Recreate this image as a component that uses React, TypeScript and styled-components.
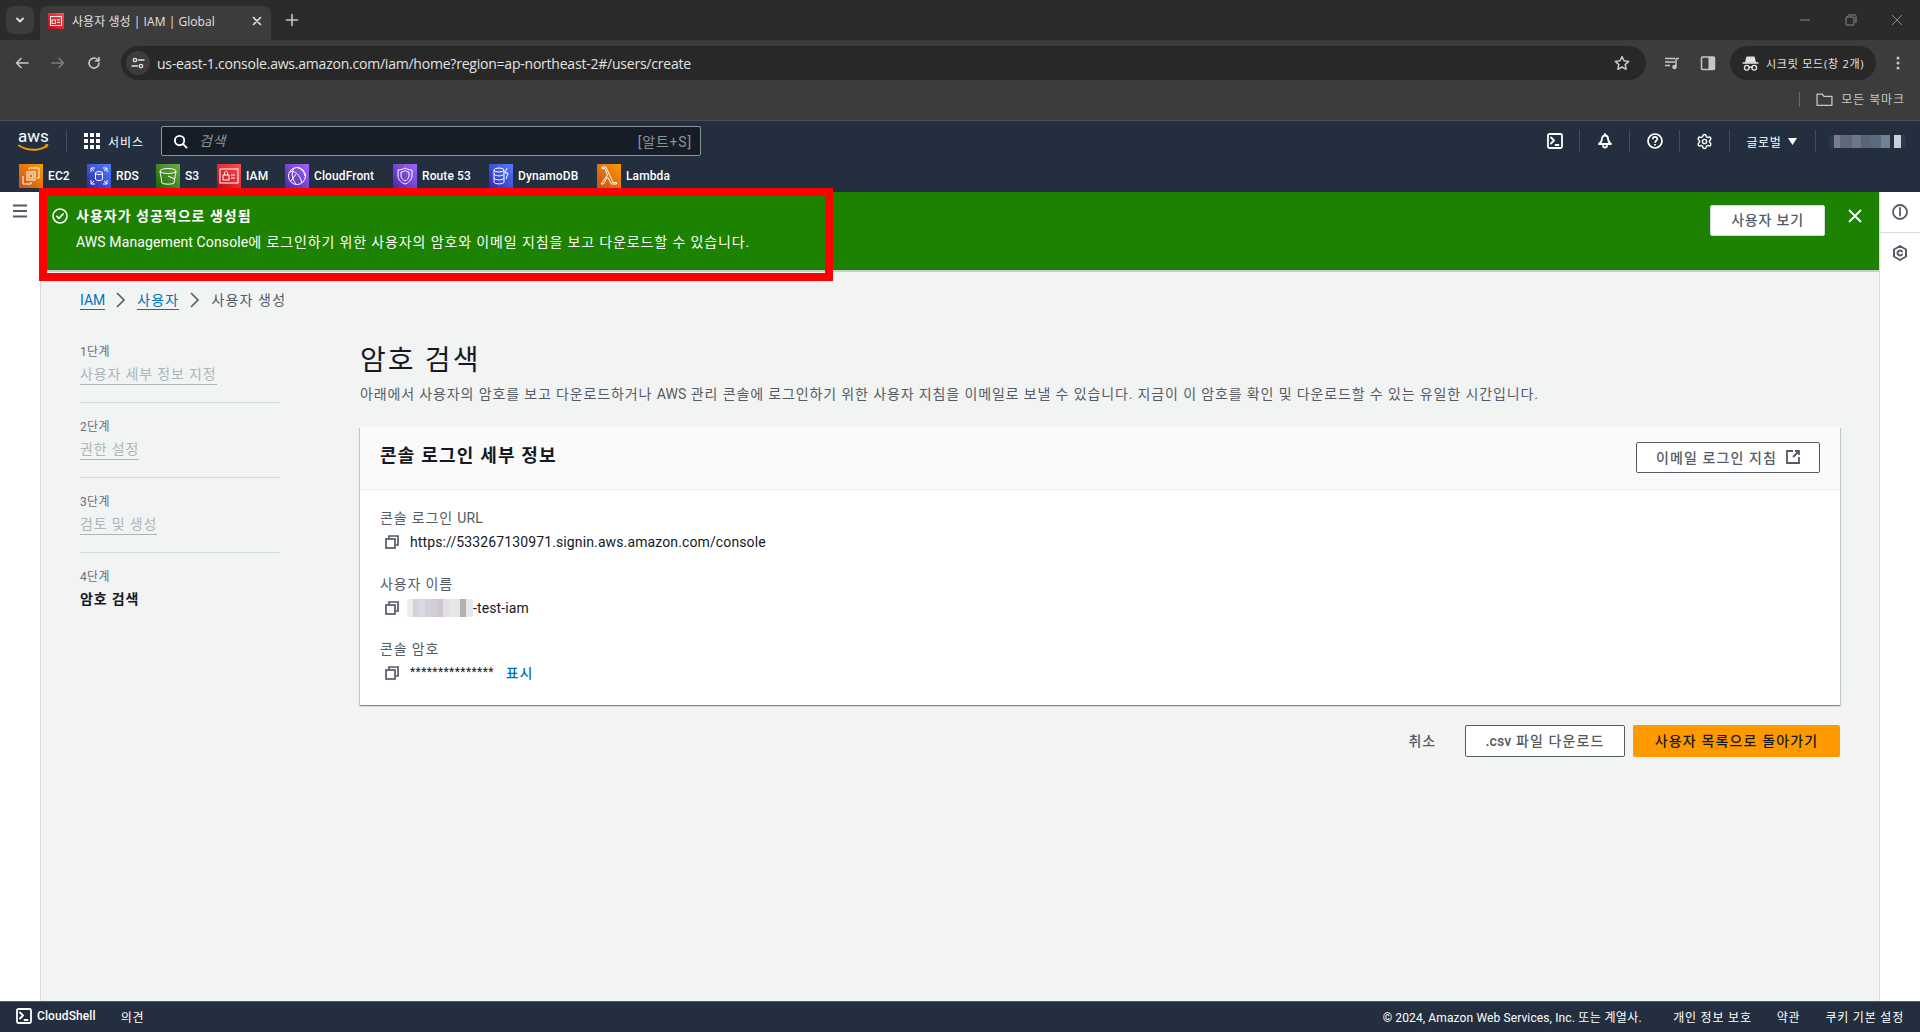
import React from "react";
import styled, { createGlobalStyle } from "styled-components";
import { Settings } from "lucide-react";

const SANS = `"Open Sans", "Noto Sans CJK KR", sans-serif`;
const EMBER = `Roboto, "Noto Sans CJK KR", sans-serif`;

const Global = createGlobalStyle`
  html, body { margin: 0; padding: 0; height: 100%; background: #fff; overflow: hidden; }
  * { box-sizing: border-box; }
  #root { height: 100%; }
`;

const Page = styled.div`
  position: relative; width: 1920px; height: 1032px; display: flex; flex-direction: column;
  font-family: ${EMBER}; font-size: 14px; color: #16191f; overflow: hidden;
`;

const L = styled.span` letter-spacing: 0.12px; `;

/* ---------- Browser chrome ---------- */
const TabStrip = styled.div`
  height: 40px; background: #2b2b2b; display: flex; align-items: flex-end; padding-left: 6px; position: relative; flex: none;
`;
const TabMenu = styled.div`
  width: 28px; height: 28px; margin-bottom: 6px; border-radius: 8px; background: #3c3c3c;
  display: flex; align-items: center; justify-content: center; color: #e3e3e3;
`;
const Tab = styled.div`
  width: 231px; height: 34px; margin-left: 6px; background: #3c3c3c; border-radius: 8px 8px 0 0;
  display: flex; align-items: center; padding: 0 8px 4px; gap: 8px; color: #e3e3e3;
  font: 12px ${SANS};
`;
const TabFavicon = styled.div`
  width: 16px; height: 16px; flex: none; display: flex; background: linear-gradient(45deg, #bd0816, #ff5252);
`;
const TabTitle = styled.span` flex: 1; white-space: nowrap; letter-spacing: 0.05px; `;
const NewTab = styled.div` margin: 0 0 12px 13px; color: #c7c7c7; display: flex; width: 16px; height: 16px; `;
const WindowControls = styled.div`
  margin-left: auto; height: 40px; display: flex; align-self: flex-start; align-items: center; gap: 30px; padding-right: 15px; color: #8a8a8a;
`;
const Toolbar = styled.div`
  height: 40px; background: #3c3c3c; display: flex; align-items: flex-end; padding: 0 0 0 14px; flex: none; color: #c7c7c7;
`;
const NavButton = styled.div<{ $dim?: boolean }>`
  width: 16px; height: 16px; margin: 0 20px 9px 0; display: flex; color: ${p => (p.$dim ? "#7c7c7c" : "#c7c7c7")};
`;
const Omnibox = styled.div`
  margin-left: -1px; width: 1525px; height: 34px; border-radius: 17px; background: #282828; display: flex; align-items: center; padding: 0 16px 0 5px;
`;
const SiteInfo = styled.div`
  width: 24px; height: 24px; border-radius: 12px; background: #3c3c3c; display: flex; align-items: center; justify-content: center; color: #e3e3e3;
`;
const Url = styled.div` flex: 1; margin-left: 7px; font: 14px ${SANS}; color: #e3e3e3; white-space: nowrap; letter-spacing: -0.22px; `;
const ToolIcon = styled.div<{ $gap: number }>`
  width: 16px; height: 16px; margin: 0 0 9px ${p => p.$gap}px; display: flex; color: #c7c7c7; flex: none;
`;
const Incognito = styled.div`
  margin-left: 14px; width: 146px; height: 34px; border-radius: 17px; background: #282828; display: flex; align-items: center; padding-left: 12px; gap: 7px;
  color: #e3e3e3; font: 11px ${SANS}; white-space: nowrap; letter-spacing: 0.75px;
`;
const Kebab = styled.div` margin: 0 0 9px 14px; width: 16px; height: 16px; display: flex; color: #c7c7c7; `;
const Bookmarks = styled.div`
  height: 41px; background: #3c3c3c; border-bottom: 1px solid #4a5058; display: flex; align-items: center; justify-content: flex-end;
  padding: 0 15px 2px 0; color: #c7c7c7; font: 12px ${SANS}; flex: none; letter-spacing: 0.9px;
`;
const BookmarkDivider = styled.div` width: 1px; height: 15px; background: #6a6a6a; margin-right: 16px; `;
const FolderWrap = styled.div` display: flex; width: 17px; height: 17px; margin-right: 8px; `;

/* ---------- Console header ---------- */
const ConsoleHeader = styled.header`
  height: 71px; background: #232f3e; flex: none; display: flex; flex-direction: column; color: #fff;
`;
const TopRow = styled.div` height: 43px; display: flex; align-items: center; padding: 0 14px 3px 18px; flex: none; `;
const LogoWrap = styled.div` width: 32px; height: 24px; display: flex; flex: none; `;
const LogoSvg = styled.svg` overflow: visible; `;
const LogoDivider = styled.div` width: 1px; height: 22px; background: #414d5c; margin: 0 17px 0 16px; flex: none; `;
const Services = styled.div` display: flex; align-items: center; gap: 8px; font: 12px ${EMBER}; width: 77px; flex: none; letter-spacing: 0.9px; white-space: nowrap; `;
const SearchBox = styled.div`
  width: 540px; height: 30px; background: #161d26; border: 1px solid #879596; border-radius: 2px; display: flex; align-items: center; padding: 0 9px 0 11px; flex: none;
`;
const SearchHint = styled.span` font: italic 14px ${EMBER}; color: #879596; margin: 0 0 2px 11px; flex: 1; letter-spacing: 0.6px; `;
const SearchKey = styled.span` font: 14px ${EMBER}; color: #879596; letter-spacing: 0.8px; margin-right: -1px; `;
const HeaderRight = styled.div` margin-left: auto; display: flex; align-items: center; height: 22px; `;
const HeaderIcon = styled.div`
  width: 50px; height: 22px; display: flex; align-items: center; justify-content: center; border-right: 1px solid #414d5c; color: #fff;
`;
const Region = styled.div`
  width: 86px; height: 22px; display: flex; align-items: center; justify-content: center; gap: 6px; border-right: 1px solid #414d5c; font: 12px ${EMBER}; padding-right: 2px; letter-spacing: 0.7px;
`;
const AccountBlur = styled.div`
  width: 77px; height: 13px; margin-left: 13px;
  background: linear-gradient(90deg, #2a3a4e 0 6%, #7c7c88 6% 14%, #5e6a7a 14% 30%, #6d7785 30% 42%, #56657a 42% 54%, #5d6b7e 54% 68%, #6d8296 68% 79%, #232f3e 79% 84%, #c9cfd6 84% 93%, #2c3846 93% 100%);
`;
const ShortcutRow = styled.div` display: flex; align-items: flex-start; padding-left: 19px; height: 28px; `;
const Shortcut = styled.div<{ $w: number }>`
  display: flex; align-items: flex-start; gap: 5px; width: ${p => p.$w}px; font: 500 12px/24px ${EMBER}; white-space: nowrap; flex: none; letter-spacing: 0.1px;
`;
const ServiceIcon = styled.div<{ $from: string; $to: string }>`
  width: 24px; height: 24px; flex: none; display: flex; color: #fff;
  background: linear-gradient(45deg, ${p => p.$from}, ${p => p.$to});
`;

/* ---------- Body ---------- */
const Body = styled.div` flex: 1; display: flex; min-height: 0; `;
const LeftRail = styled.div`
  width: 41px; flex: none; background: #fff; border-right: 1px solid #d5dbdb; padding: 12px 0 0 13px; color: #545b64;
`;
const Hamburger = styled.div` width: 14px; height: 14px; display: flex; `;
const Main = styled.main` flex: 1; background: #f2f3f3; display: flex; flex-direction: column; min-width: 0; `;
const RightRail = styled.div` width: 41px; flex: none; background: #fff; border-left: 1px solid #d5dbdb; color: #545b64; display: flex; flex-direction: column; `;
const RailButton = styled.div<{ $line?: boolean }>`
  height: ${p => (p.$line ? 41 : 40)}px; display: flex; align-items: center; justify-content: center;
  ${p => (p.$line ? "border-bottom: 1px solid #d5dbdb;" : "")}
`;
const Banner = styled.div`
  height: 80px; flex: none; background: #1d8102; border-bottom: 2px solid #c9cdcd; color: #fff; display: flex; align-items: flex-start; position: relative;
  padding: 13px 16px 0 11px;
`;
const BannerCheck = styled.div` width: 16px; height: 16px; display: flex; margin: 3px 8px 0 0; flex: none; `;
const BannerText = styled.div` flex: 1; `;
const BannerTitle = styled.div` font: 700 14px/20px ${EMBER}; letter-spacing: 1px; padding-top: 1px; `;
const BannerMessage = styled.div` font: 14px/20px ${EMBER}; margin-top: 6px; letter-spacing: 0.87px; `;
const BannerButton = styled.button`
  width: 115px; height: 31px; background: #fff; border: 1px solid #d5dbdb; border-radius: 2px; font: 500 14px ${EMBER}; color: #545b64; margin: 0 22px 0 0; padding: 0 0 3px; letter-spacing: 0.8px;
`;
const BannerClose = styled.div` width: 16px; height: 16px; display: flex; margin-top: 3px; `;

const Highlight = styled.div`
  position: absolute; left: 39px; top: 188px; width: 794px; height: 93px; border: 8px solid #ff0000; pointer-events: none;
`;

const Breadcrumbs = styled.nav`
  height: 69px; flex: none; padding: 18px 0 0 39px; display: flex; align-items: flex-start; line-height: 20px; color: #545b64; letter-spacing: 1.15px;
`;
const Crumb = styled.a<{ $latin?: boolean }>`
  color: #0073bb; text-decoration: none; border-bottom: 1px solid #0073bb; height: 20px; ${p => (p.$latin ? "letter-spacing: 0;" : "")}
`;
const CrumbSep = styled.span` display: flex; width: 12px; height: 16px; margin: 2px 10px 0 10px; color: #545b64; `;
const Columns = styled.div` display: grid; grid-template-columns: 200px 1fr; column-gap: 80px; padding: 0 39px 0 39px; `;
const Steps = styled.ol` list-style: none; margin: 0; padding: 3px 0 0 0; `;
const Step = styled.li<{ $last?: boolean }>`
  padding-bottom: 17px; margin-bottom: 16px; ${p => (p.$last ? "" : "border-bottom: 1px solid #d5dbdb;")}
`;
const StepNumber = styled.div` font: 12px/16px ${EMBER}; color: #687078; margin-bottom: 5px; letter-spacing: 0.3px; `;
const StepName = styled.div<{ $active?: boolean }>`
  line-height: 19px; letter-spacing: 0.85px; display: inline-block;
  ${p => (p.$active
    ? "font-weight: 700; color: #16191f;"
    : "color: #aab7b8; border-bottom: 1px solid #aab7b8;")}
`;
const Content = styled.div` min-width: 0; `;
const Title = styled.h1` margin: 2px 0 0; font: 400 28px/36px ${EMBER}; color: #16191f; letter-spacing: 2.1px; `;
const Description = styled.p` margin: 5px 0 0; line-height: 20px; color: #545b64; white-space: nowrap; letter-spacing: 0.87px; `;
const Card = styled.section`
  margin-top: 23px; background: #fff; height: 278px;
  box-shadow: 0 1px 1px 0 rgba(0,28,36,.3), 1px 1px 1px 0 rgba(0,28,36,.15), -1px 1px 1px 0 rgba(0,28,36,.15);
`;
const CardHeader = styled.div`
  height: 63px; background: #fafafa; border-bottom: 1px solid #eaeded; display: flex; justify-content: space-between; align-items: flex-start; padding: 15px 20px 0;
`;
const CardTitle = styled.h2` margin: 1px 0 0; font: 700 18px/26px ${EMBER}; color: #16191f; letter-spacing: 1.2px; `;
const OutlineButton = styled.button<{ $w: number; $h: number }>`
  width: ${p => p.$w}px; height: ${p => p.$h}px; background: #fff; border: 1px solid #545b64; border-radius: 2px; color: #545b64;
  font: 500 14px ${EMBER}; display: flex; align-items: center; justify-content: center; gap: 9px; padding: 0 0 2px; letter-spacing: 1.1px;
`;
const CardBody = styled.div` padding: 18px 20px 0; `;
const Field = styled.div` margin-bottom: 19.5px; `;
const FieldLabel = styled.div` line-height: 20px; color: #545b64; margin-bottom: 2px; letter-spacing: 0.85px; `;
const FieldValue = styled.div` height: 24px; display: flex; align-items: center; color: #16191f; padding-left: 5px; letter-spacing: 0.12px; `;
const CopyIcon = styled.div` width: 14px; height: 14px; display: flex; color: #545b64; flex: none; margin-right: 11px; `;
const UserBlur = styled.span`
  width: 66px; height: 18px; margin-left: -3px; flex: none;
  background: linear-gradient(90deg, #ececec 0 9%, #d6cfd4 9% 18%, #ddd8df 18% 27%, #cfcfd9 27% 36%, #d3ced8 36% 45%, #cfc7cc 45% 54%, #dfdfe5 54% 63%, #e6e6e9 63% 81%, #b8b0b0 81% 90%, #e8e8e8 90% 100%);
`;
const ShowLink = styled.a` color: #0073bb; margin: 0 0 2px 12px; letter-spacing: 0.8px; font-weight: 500; `;
const Masked = styled.span` font-size: 12px; letter-spacing: 0.42px; margin-bottom: 3px; `;
const Actions = styled.div` margin-top: 20px; display: flex; justify-content: flex-end; align-items: center; `;
const CancelButton = styled.button`
  border: 0; background: none; font: 500 14px ${EMBER}; color: #545b64; padding: 0 0 2px; margin-right: 29px; letter-spacing: 0.9px;
`;
const PrimaryButton = styled.button`
  width: 207px; height: 32px; margin-left: 8px; background: #ff9900; border: 0; border-radius: 2px; font: 500 14px ${EMBER}; color: #16191f; padding: 0 0 2px; letter-spacing: 1.15px;
`;

/* ---------- Footer ---------- */
const Footer = styled.footer`
  height: 31px; flex: none; background: #232f3e; border-top: 1px solid #545b64; color: #fff; display: flex; align-items: center; font: 12px ${EMBER}; padding: 0 16px 2px;
`;
const FooterLeft = styled.div` display: flex; align-items: center; `;
const FooterShell = styled.span` display: flex; align-items: center; gap: 5px; margin-right: 25px; font-weight: 500; letter-spacing: 0.1px; `;
const FooterLink = styled.span` letter-spacing: 0.8px; `;
const Copyright = styled.span` letter-spacing: 0.35px; margin-right: 6px; `;
const FooterRight = styled.div` margin-left: auto; display: flex; gap: 25px; `;

/* ---------- Icons ---------- */
const Svg: React.FC<React.PropsWithChildren<{ s?: number; vb?: string; sw?: number }>> = ({ s = 16, vb = "0 0 16 16", sw = 2, children }) => (
  <svg width={s} height={s} viewBox={vb} fill="none" stroke="currentColor" strokeWidth={sw} strokeLinecap="round" strokeLinejoin="round">{children}</svg>
);

const ShellIcon = () => (
  <Svg sw={1.8}><rect x="1" y="1" width="14" height="14" rx="1.5" /><path d="M4 4.5 7 7.5 4 10.5M8.5 12h3" /></Svg>
);
const Copy = () => (
  <Svg s={14} vb="0 0 14 14" sw={1.7}><path d="M4 3.5V1h9v9h-2.5" strokeLinejoin="miter" strokeLinecap="butt" /><rect x="1" y="4" width="9" height="9" strokeLinejoin="miter" /></Svg>
);
const ExternalIcon = () => (
  <Svg s={14} vb="0 0 14 14" sw={1.8}><path d="M7 1H1v12h12V7M7 7l6-6M9 1h4v4" strokeLinecap="butt" strokeLinejoin="miter" /></Svg>
);

const AwsLogo = () => (
  <LogoSvg width="32" height="24" viewBox="0 0 32 24">
    <text x="0" y="13" fill="#fff" fontFamily="Roboto, sans-serif" fontSize="17">aws</text>
    <path d="M1 16.5c8 5.5 20 5.5 27 1" stroke="#f90" strokeWidth="1.8" fill="none" strokeLinecap="round" />
    <path d="M26.5 15.5l4-.5-1.5 4" fill="#f90" />
  </LogoSvg>
);

const GridIcon = () => (
  <svg width="16" height="16" viewBox="0 0 16 16" fill="#fff">
    {[0, 6, 12].map(y => [0, 6, 12].map(x => <rect key={`${x}${y}`} x={x} y={y} width="4" height="4" />))}
  </svg>
);

const ServiceSvg: React.FC<React.PropsWithChildren> = ({ children }) => (
  <svg width="24" height="24" viewBox="0 0 24 24" fill="none" stroke="#fff" strokeWidth="1">{children}</svg>
);

const services: { name: string; w: number; from: string; to: string; art: React.ReactNode }[] = [
  { name: "EC2", w: 68, from: "#c8511b", to: "#ff9900", art: <><rect x="8" y="8" width="8" height="8" /><path d="M10 5.500V4h10v10h-2M4 12v8h8v-2" /><path d="M10 10h4v4h-4z" /></> },
  { name: "RDS", w: 69, from: "#2e27ad", to: "#527fff", art: <><ellipse cx="12" cy="9" rx="3.500" ry="1.500" /><path d="M8.500 9v6c0 2 7 2 7 0V9M4 8V4h4M20 8V4h-4M4 16v4h4M20 16v4h-4M4 4l3 3M20 4l-3 3M4 20l3-3M20 20l-3-3" /></> },
  { name: "S3", w: 61, from: "#1b660f", to: "#6cae3e", art: <><ellipse cx="12" cy="7" rx="8" ry="2.500" /><path d="M4 7l2 12c.500 1.500 11.500 1.500 12 0l2-12M12 12l7 3" /></> },
  { name: "IAM", w: 68, from: "#bd0816", to: "#ff5252", art: <><rect x="3" y="5" width="18" height="14" /><rect x="6" y="11" width="6" height="5" /><path d="M7.500 11V9c0-2 3-2 3 0v2M14 11h4M14 14h4" /></> },
  { name: "CloudFront", w: 108, from: "#4d27a8", to: "#a166ff", art: <><circle cx="12" cy="12" r="8.500" /><path d="M5 8c5-2 10 3 12 11M9 4c-3 5-2 11 2 16M13 4c5 1 6 5 7 8M6 17l5-7" /></> },
  { name: "Route 53", w: 96, from: "#4d27a8", to: "#a166ff", art: <><path d="M5 6c3 0 5-1 7-2 2 1 4 2 7 2v6c0 4-4 7-7 8-3-1-7-4-7-8z" /><path d="M8 8c2 0 3-1 4-1.500C13 7 14 8 16 8v4c0 2-2 4-4 5-2-1-4-3-4-5z" /></> },
  { name: "DynamoDB", w: 108, from: "#2e27ad", to: "#527fff", art: <><ellipse cx="10" cy="6" rx="5" ry="2" /><path d="M5 6v12c0 2.500 10 2.500 10 0V6M5 10c1 2.500 9 2.500 10 0M5 14c1 2.500 9 2.500 10 0M18 4l-2 5h3l-2 6" /></> },
  { name: "Lambda", w: 70, from: "#c8511b", to: "#ff9900", art: <path d="M4 20l6.500-9L8 4.500H5V3h4l7 15.500h3.500V20h-5L10.500 13 6.500 20z" /> },
];

const steps = [
  { n: "1단계", name: "사용자 세부 정보 지정" },
  { n: "2단계", name: "권한 설정" },
  { n: "3단계", name: "검토 및 생성" },
];

export default function App() {
  return (
    <Page>
      <Global />
      <TabStrip>
        <TabMenu><Svg s={12} vb="0 0 12 12" sw={1.8}><path d="M3 4.500 6 7.500 9 4.500" /></Svg></TabMenu>
        <Tab>
          <TabFavicon>
            <svg width="16" height="16" viewBox="0 0 16 16" fill="none" stroke="#fff" strokeWidth="0.9"><rect x="2.500" y="3.500" width="11" height="9" /><rect x="4" y="7" width="3.500" height="3.500" /><path d="M9 7h3M9 9.500h3" /></svg>
          </TabFavicon>
          <TabTitle>사용자 생성 | IAM | Global</TabTitle>
          <Svg s={12} vb="0 0 12 12" sw={1.6}><path d="M2.500 2.500l7 7M9.500 2.500l-7 7" /></Svg>
        </Tab>
        <NewTab><Svg sw={1.6}><path d="M8 2.500v11M2.500 8h11" /></Svg></NewTab>
        <WindowControls>
          <Svg sw={1}><path d="M3 8h10" strokeLinecap="butt" /></Svg>
          <Svg sw={1}><rect x="3" y="5" width="8" height="8" rx="1" /><path d="M5.500 3H12a1 1 0 0 1 1 1v6.500" /></Svg>
          <Svg sw={1}><path d="M3 3l10 10M13 3L3 13" strokeLinecap="butt" /></Svg>
        </WindowControls>
      </TabStrip>
      <Toolbar>
        <NavButton><Svg sw={1.6}><path d="M14 8H2.500M7 3.500 2.500 8 7 12.500" /></Svg></NavButton>
        <NavButton $dim><Svg sw={1.6}><path d="M2 8h11.500M9 3.500 13.500 8 9 12.500" /></Svg></NavButton>
        <NavButton><Svg sw={1.6}><path d="M13 8a5 5 0 1 1-1.500-3.500L13 6M13 2.500V6H9.500" /></Svg></NavButton>
        <Omnibox>
          <SiteInfo>
            <Svg s={14} vb="0 0 14 14" sw={1.3}><circle cx="4" cy="4" r="1.700" /><path d="M7.500 4H13M1 10h5.500" /><circle cx="10" cy="10" r="1.700" /></Svg>
          </SiteInfo>
          <Url>us-east-1.console.aws.amazon.com/iam/home?region=ap-northeast-2#/users/create</Url>
          <Svg sw={1.5}><path d="M8 1.500l2 4.300 4.700.6-3.500 3.200.9 4.700L8 12l-4.100 2.300.9-4.700L1.300 6.400 6 5.800z" /></Svg>
        </Omnibox>
        <ToolIcon $gap={18}>
          <Svg sw={1.5}><path d="M1 3.500h10M1 7h10M1 10.500h5" strokeLinecap="butt" /><path d="M12 3.500h3M12 3.500v8" strokeLinecap="butt" /><circle cx="10.500" cy="12" r="1.500" fill="currentColor" /></Svg>
        </ToolIcon>
        <ToolIcon $gap={20}>
          <svg width="16" height="16" viewBox="0 0 16 16"><rect x="1.500" y="2" width="13" height="12.500" rx="1" fill="none" stroke="currentColor" strokeWidth="1.500" /><rect x="8.500" y="2" width="6" height="12.500" fill="currentColor" /></svg>
        </ToolIcon>
        <Incognito>
          <Svg s={17} vb="0 0 16 16" sw={1.3}>
            <path d="M1 7.500h14M3.500 7l1.200-5h6.600l1.200 5" fill="currentColor" />
            <circle cx="4.500" cy="12" r="2.200" /><circle cx="11.500" cy="12" r="2.200" /><path d="M6.700 11.500h2.600" />
          </Svg>
          시크릿 모드(창 2개)
        </Incognito>
        <Kebab>
          <svg width="16" height="16" viewBox="0 0 16 16" fill="currentColor"><circle cx="8" cy="3" r="1.500" /><circle cx="8" cy="8" r="1.500" /><circle cx="8" cy="13" r="1.500" /></svg>
        </Kebab>
      </Toolbar>
      <Bookmarks>
        <BookmarkDivider />
        <FolderWrap><Svg s={17} vb="0 0 16 16" sw={1.2}><path d="M1 3h5l1.500 2H15v8.500H1z" /></Svg></FolderWrap>
        모든 북마크
      </Bookmarks>

      <ConsoleHeader>
        <TopRow>
          <LogoWrap><AwsLogo /></LogoWrap>
          <LogoDivider />
          <Services><GridIcon />서비스</Services>
          <SearchBox>
            <svg width="15" height="15" viewBox="0 0 16 16" fill="none" stroke="#fff" strokeWidth="2"><circle cx="7" cy="7" r="5" /><path d="M10.500 10.500 15 15" /></svg>
            <SearchHint>검색</SearchHint>
            <SearchKey>[알트+S]</SearchKey>
          </SearchBox>
          <HeaderRight>
            <HeaderIcon><ShellIcon /></HeaderIcon>
            <HeaderIcon><Svg sw={1.8}><path d="M8 2.500a3 3 0 0 1 3 3c0 2.500 1 4 3 5.500H2c2-1.500 3-3 3-5.500a3 3 0 0 1 3-3zM6 12.500a2 2 0 0 0 4 0M8 1v1" /></Svg></HeaderIcon>
            <HeaderIcon><svg width="16" height="16" viewBox="0 0 16 16" fill="none" stroke="#fff" strokeWidth="1.700"><circle cx="8" cy="8" r="7" /><path d="M5.800 6.200c0-3 4.500-3 4.500-.2 0 1.800-2.300 1.700-2.300 3.700" /><path d="M8 11v1.500" /></svg></HeaderIcon>
            <HeaderIcon><Settings size={17} strokeWidth={2} /></HeaderIcon>
            <Region>글로벌 <svg width="9" height="7" viewBox="0 0 9 7" fill="#fff"><path d="M0 0h9L4.500 7z" /></svg></Region>
            <AccountBlur />
          </HeaderRight>
        </TopRow>
        <ShortcutRow>
          {services.map(s => (
            <Shortcut key={s.name} $w={s.w}>
              <ServiceIcon $from={s.from} $to={s.to}><ServiceSvg>{s.art}</ServiceSvg></ServiceIcon>
              {s.name}
            </Shortcut>
          ))}
        </ShortcutRow>
      </ConsoleHeader>

      <Body>
        <LeftRail>
          <Hamburger><svg width="14" height="14" viewBox="0 0 14 14" stroke="currentColor" strokeWidth="2"><path d="M0 1.500h14M0 7h14M0 12.500h14" /></svg></Hamburger>
        </LeftRail>
        <Main>
          <Banner>
            <BannerCheck><Svg s={16} sw={1.6}><circle cx="8" cy="8" r="7" /><path d="M4.800 8.200 7 10.400l4.300-4.600" /></Svg></BannerCheck>
            <BannerText>
              <BannerTitle>사용자가 성공적으로 생성됨</BannerTitle>
              <BannerMessage><L>AWS Management Console</L>에 로그인하기 위한 사용자의 암호와 이메일 지침을 보고 다운로드할 수 있습니다.</BannerMessage>
            </BannerText>
            <BannerButton>사용자 보기</BannerButton>
            <BannerClose><Svg s={16} sw={1.8}><path d="M2 2l12 12M14 2 2 14" strokeLinecap="butt" /></Svg></BannerClose>
          </Banner>
          <Breadcrumbs>
            <Crumb $latin>IAM</Crumb>
            <CrumbSep><svg width="12" height="16" viewBox="0 0 12 16" fill="none" stroke="currentColor" strokeWidth="1.600"><path d="M2 1l7 7-7 7" /></svg></CrumbSep>
            <Crumb>사용자</Crumb>
            <CrumbSep><svg width="12" height="16" viewBox="0 0 12 16" fill="none" stroke="currentColor" strokeWidth="1.600"><path d="M2 1l7 7-7 7" /></svg></CrumbSep>
            사용자 생성
          </Breadcrumbs>
          <Columns>
            <Steps>
              {steps.map(s => (
                <Step key={s.n}>
                  <StepNumber>{s.n}</StepNumber>
                  <StepName>{s.name}</StepName>
                </Step>
              ))}
              <Step $last>
                <StepNumber>4단계</StepNumber>
                <StepName $active>암호 검색</StepName>
              </Step>
            </Steps>
            <Content>
              <Title>암호 검색</Title>
              <Description>아래에서 사용자의 암호를 보고 다운로드하거나 <L>AWS</L> 관리 콘솔에 로그인하기 위한 사용자 지침을 이메일로 보낼 수 있습니다. 지금이 이 암호를 확인 및 다운로드할 수 있는 유일한 시간입니다.</Description>
              <Card>
                <CardHeader>
                  <CardTitle>콘솔 로그인 세부 정보</CardTitle>
                  <OutlineButton $w={184} $h={31}>이메일 로그인 지침 <ExternalIcon /></OutlineButton>
                </CardHeader>
                <CardBody>
                  <Field>
                    <FieldLabel>콘솔 로그인 <L>URL</L></FieldLabel>
                    <FieldValue><CopyIcon><Copy /></CopyIcon>https://533267130971.signin.aws.amazon.com/console</FieldValue>
                  </Field>
                  <Field>
                    <FieldLabel>사용자 이름</FieldLabel>
                    <FieldValue><CopyIcon><Copy /></CopyIcon><UserBlur />-test-iam</FieldValue>
                  </Field>
                  <Field>
                    <FieldLabel>콘솔 암호</FieldLabel>
                    <FieldValue><CopyIcon><Copy /></CopyIcon><Masked>***************</Masked><ShowLink>표시</ShowLink></FieldValue>
                  </Field>
                </CardBody>
              </Card>
              <Actions>
                <CancelButton>취소</CancelButton>
                <OutlineButton $w={160} $h={32}><span><L>.csv</L> 파일 다운로드</span></OutlineButton>
                <PrimaryButton>사용자 목록으로 돌아가기</PrimaryButton>
              </Actions>
            </Content>
          </Columns>
        </Main>
        <RightRail>
          <RailButton $line>
            <Svg s={16} sw={1.8}><circle cx="8" cy="8" r="7" /><path d="M8 7v4.500M8 4v1.500" /></Svg>
          </RailButton>
          <RailButton>
            <Svg s={16} sw={2}><path d="M8 1l6 3.500v7L8 15l-6-3.500v-7z" /><path d="M10 6.500a2.500 2.500 0 1 0 0 3" /></Svg>
          </RailButton>
        </RightRail>
      </Body>

      <Footer>
        <FooterLeft>
          <FooterShell><ShellIcon />CloudShell</FooterShell>
          <FooterLink>의견</FooterLink>
        </FooterLeft>
        <FooterRight>
          <Copyright><L>© 2024, Amazon Web Services, Inc.</L> 또는 계열사.</Copyright>
          <FooterLink>개인 정보 보호</FooterLink>
          <FooterLink>약관</FooterLink>
          <FooterLink>쿠키 기본 설정</FooterLink>
        </FooterRight>
      </Footer>
      <Highlight />
    </Page>
  );
}
